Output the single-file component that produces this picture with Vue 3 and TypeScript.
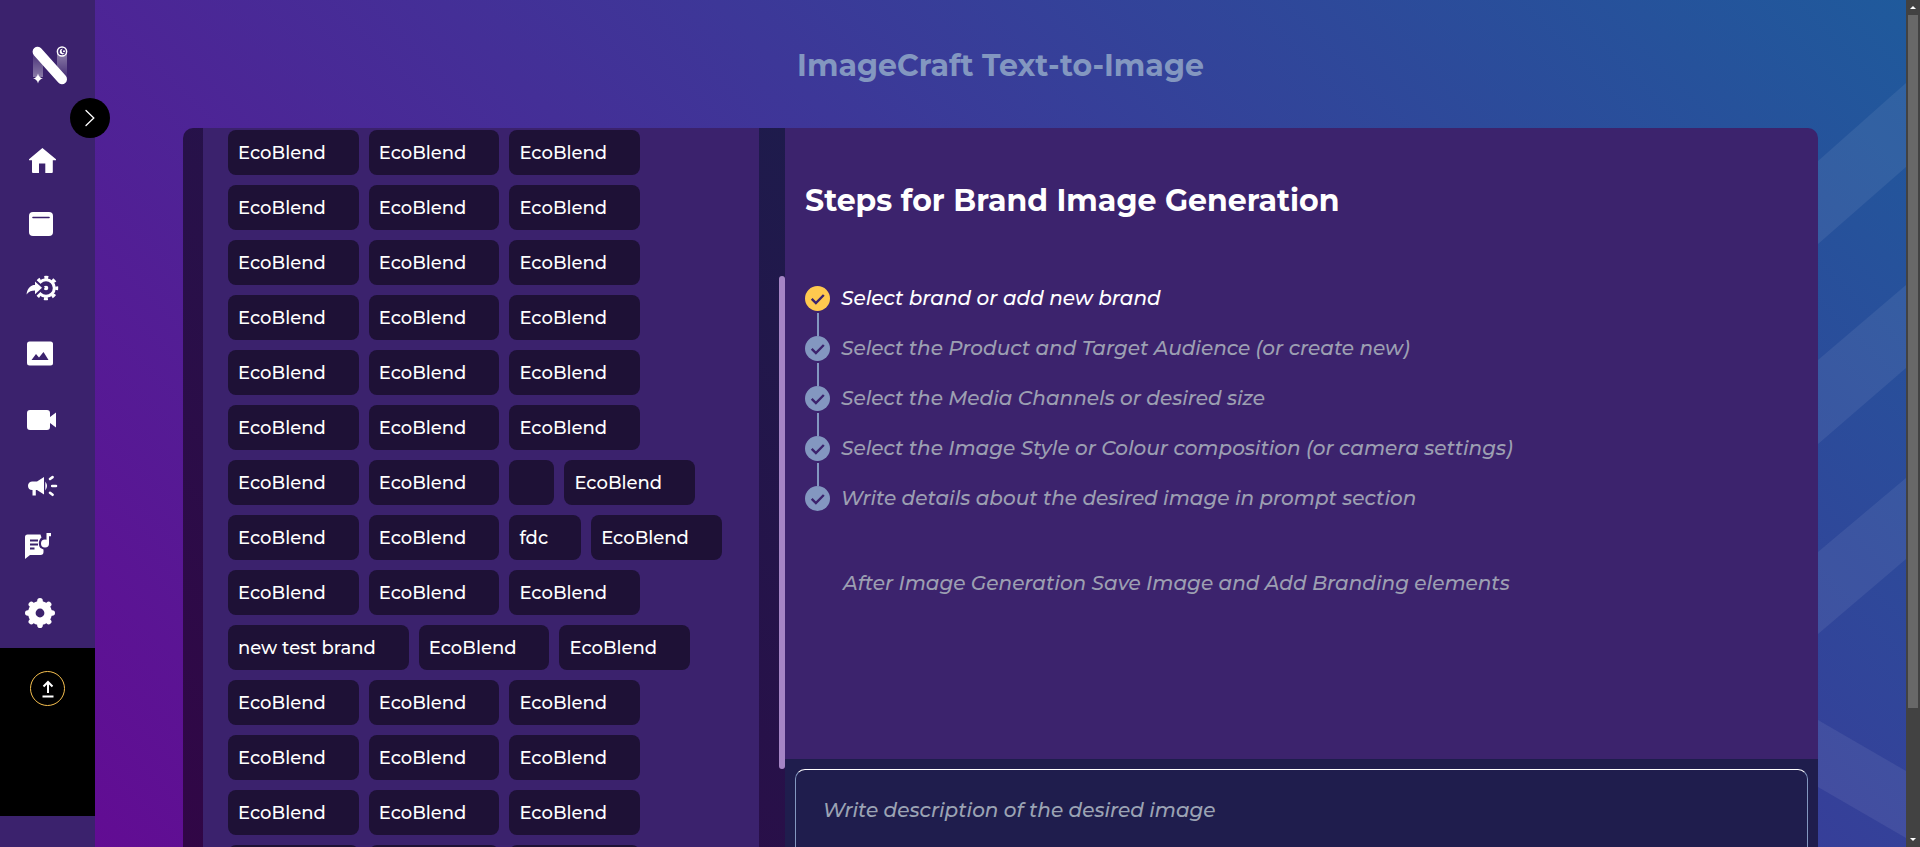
<script setup lang="ts">
import { ref } from 'vue'

interface NavItem {
  id: string
  label: string
}

const navItems: NavItem[] = [
  { id: 'home', label: 'Home' },
  { id: 'board', label: 'Projects' },
  { id: 'process', label: 'Automation' },
  { id: 'image', label: 'Images' },
  { id: 'video', label: 'Video' },
  { id: 'campaign', label: 'Campaigns' },
  { id: 'lyrics', label: 'Audio and text' },
  { id: 'settings', label: 'Settings' },
]

const gearTeeth: number[] = [0, 45, 90, 135, 180, 225, 270, 315]

const eco = (count: number): string[] => Array.from({ length: count }, () => 'EcoBlend')

const brands: string[] = [
  ...eco(20),
  '',
  ...eco(3),
  'fdc',
  ...eco(4),
  'new test brand',
  ...eco(14),
]

const steps: string[] = [
  'Select brand or add new brand',
  'Select the Product and Target Audience (or create new)',
  'Select the Media Channels or desired size',
  'Select the Image Style or Colour composition (or camera settings)',
  'Write details about the desired image in prompt section',
]

const currentStep = ref(0)
const prompt = ref('')
</script>

<template>
  <div class="shell">
    <aside class="sidebar">
      <a class="logo" href="#" aria-label="Home page">
        <svg width="40" height="42" viewBox="0 0 40 42" aria-hidden="true">
          <defs>
            <linearGradient id="fadeUp" x1="0" y1="0" x2="0" y2="1">
              <stop offset="0" stop-color="#fff" stop-opacity="0.05" />
              <stop offset="1" stop-color="#fff" stop-opacity="0.4" />
            </linearGradient>
            <linearGradient id="fadeDown" x1="0" y1="0" x2="0" y2="1">
              <stop offset="0" stop-color="#fff" stop-opacity="0.4" />
              <stop offset="1" stop-color="#fff" stop-opacity="0.05" />
            </linearGradient>
          </defs>
          <rect x="2" y="7" width="10" height="25" fill="url(#fadeUp)" />
          <rect x="26" y="9" width="10" height="24" fill="url(#fadeDown)" />
          <path d="M6.600 6.800 31 34.200" stroke="#fff" stroke-width="10" stroke-linecap="round" />
          <path d="M7 28.500q.8 4.200 5 5-4.200.8-5 5-.8-4.200-5-5 4.200-.8 5-5z" fill="#fff" />
          <circle cx="31" cy="6.500" r="4.600" fill="#3b226d" stroke="#fff" stroke-width="1.500" />
          <path d="M32 3.800a2.800 2.800 0 1 0 1.800 4.300 2.200 2.200 0 0 1-1.800-4.300z" fill="#fff" />
          <circle cx="33" cy="6.300" r="1" fill="#fff" />
        </svg>
      </a>
      <button class="expand" type="button" aria-label="Expand menu">
        <svg width="20" height="20" viewBox="0 0 20 20" aria-hidden="true">
          <path d="M6 2.500 13.800 10 6 17.500" fill="none" stroke="#fff" stroke-width="1.300" stroke-linecap="round" />
        </svg>
      </button>

      <nav class="nav" aria-label="Main">
        <a v-for="item in navItems" :key="item.id" class="nav-link" href="#" :aria-label="item.label">
          <svg width="48" height="48" viewBox="0 0 48 48" fill="#fff" aria-hidden="true">
            <path
              v-if="item.id === 'home'"
              d="M26.400 12 13 23.200v1h3V36a1 1 0 0 0 1 1h6v-9.500h6.300V37h6.500a1 1 0 0 0 1-1V24.200H40v-1z"
            />
            <g v-else-if="item.id === 'board'">
              <rect x="13" y="11" width="24" height="24" rx="4" />
              <path d="M17 16.500h16" stroke="#3b226d" stroke-width="1.600" stroke-linecap="round" />
            </g>
            <g v-else-if="item.id === 'process'">
              <circle cx="30" cy="22" r="8.300" fill="none" stroke="#fff" stroke-width="3" />
              <circle
                cx="30" cy="22" r="10.700" fill="none" stroke="#fff" stroke-width="3"
                stroke-dasharray="4 4.403" stroke-dashoffset="2"
              />
              <circle cx="30" cy="22" r="2.300" />
              <path
                d="M10.500 28.500C11.500 21.500 15 19 19 19v-3.500l7 6.300-7 6.500v-3.700c-3.500 0-6 1-8.500 3.900z"
                stroke="#3b226d" stroke-width="4" paint-order="stroke"
              />
            </g>
            <g v-else-if="item.id === 'image'">
              <rect x="11" y="10.500" width="26" height="24" rx="2.500" />
              <path d="M15.500 29 20 23l3 3.500 4.500-5.500 5 8z" fill="#3b226d" />
            </g>
            <path
              v-else-if="item.id === 'video'"
              d="M14 14h17a3 3 0 0 1 3 3v4l6-4.500v15L34 27v4a3 3 0 0 1-3 3H14a3 3 0 0 1-3-3V17a3 3 0 0 1 3-3z"
            />
            <g v-else-if="item.id === 'campaign'">
              <path d="M17 20.500h4l7-4.500v17.500l-7-4.500h-1.200v5.500h-3.300V29a4.300 4.300 0 0 1-4.500-4 4.300 4.300 0 0 1 5-4.500z" />
              <path d="M29.300 20.500q3.400 4.500 0 9z" />
              <path d="m34 18 2.600-1.900M36.200 25h3.800M34 31.800l2.600 2" fill="none" stroke="#fff" stroke-width="2.600" stroke-linecap="round" />
            </g>
            <g v-else-if="item.id === 'lyrics'">
              <path d="M11.500 8.500h13l1 3c-3 2-3.500 8-1 10.500l3 1.500v2.500a3 3 0 0 1-3 3H14L9 33V11a2.500 2.500 0 0 1 2.500-2.500z" />
              <path d="M14 14.500h8M14 18.500h8M14 22.500h4.500" fill="none" stroke="#3b226d" stroke-width="2" />
              <circle cx="29" cy="17.500" r="4" />
              <path d="M30.500 17V7H35v3.300h-2V17z" />
            </g>
            <g v-else fill="none" stroke="#fff">
              <path
                v-for="angle in gearTeeth"
                :key="angle"
                d="M24 12.500v-2.700"
                :transform="`rotate(${angle} 24 22)`"
                stroke-width="5.600"
                stroke-linecap="round"
              />
              <circle cx="24" cy="22" r="8.200" stroke-width="7.600" />
            </g>
          </svg>
        </a>
      </nav>

      <div class="upgrade">
        <button class="upload" type="button" aria-label="Upload">
          <svg width="18" height="20" viewBox="0 0 18 20" fill="none" stroke="#fff" stroke-width="2" aria-hidden="true">
            <path d="M9 14V3M4.500 7.500 9 3l4.500 4.500M3.500 17.500h11" />
          </svg>
        </button>
      </div>
    </aside>

    <main class="main">
      <svg class="rays" width="88" height="847" viewBox="0 0 88 847" fill="#fff" fill-opacity="0.07" aria-hidden="true">
        <path d="M0 161 88 83v84L0 244z" />
        <path d="M0 360 88 285v83L0 444z" />
        <path d="M0 552 88 478v81L0 634z" />
        <path d="M0 720 88 771v67L0 787z" />
      </svg>

      <h1 class="title">ImageCraft Text-to-Image</h1>

      <div class="card">
        <section class="brands" aria-label="Brands">
          <div class="brand-list">
            <button v-for="(brand, i) in brands" :key="i" class="chip" type="button">{{ brand }}</button>
          </div>
          <div class="track" aria-hidden="true"><div class="thumb"></div></div>
        </section>

        <section class="guide">
          <div class="guide-body">
            <h2 class="guide-title">Steps for Brand Image Generation</h2>
            <ol class="steps">
              <li v-for="(step, i) in steps" :key="step" class="step" :class="{ active: i === currentStep }">
                <span class="marker">
                  <svg width="25" height="25" viewBox="0 0 25 25" aria-hidden="true">
                    <circle cx="12.500" cy="12.500" r="12.500" fill="currentColor" />
                    <path d="m6.700 12.800 4.200 4.200 7.900-8" fill="none" stroke="#3c236d" stroke-width="2.400" />
                  </svg>
                  <span v-if="i < steps.length - 1" class="link"></span>
                </span>
                <span class="step-text">{{ step }}</span>
              </li>
            </ol>
            <p class="note">After Image Generation Save Image and Add Branding elements</p>
          </div>
          <div class="prompt">
            <textarea
              v-model="prompt"
              class="prompt-box"
              aria-label="Image description"
              placeholder="Write description of the desired image"
            ></textarea>
          </div>
        </section>
      </div>
    </main>

    <div class="page-scroll" aria-hidden="true">
      <span class="arrow up"></span>
      <span class="page-thumb"></span>
      <span class="arrow down"></span>
    </div>
  </div>
</template>

<style>
html,
body {
  margin: 0;
  overflow: hidden;
}
</style>

<style scoped>
.shell {
  display: flex;
  height: 100vh;
  overflow: hidden;
  background: #3b226d;
  font-family: Montserrat, Inter, 'Open Sans', sans-serif;
}

.shell *,
.shell *::before,
.shell *::after {
  box-sizing: border-box;
}

/* Sidebar */
.sidebar {
  position: relative;
  z-index: 2;
  flex: none;
  width: 95px;
  background: #3b226d;
}

.logo {
  display: block;
  height: 127px;
  padding: 45px 0 0 31px;
}

.expand {
  position: absolute;
  top: 98px;
  right: -15px;
  display: grid;
  place-items: center;
  width: 40px;
  height: 40px;
  padding: 0;
  border: 0;
  border-radius: 50%;
  background: #000;
}

.nav {
  display: flex;
  flex-direction: column;
  height: 521px;
}

.nav-link {
  display: flex;
  align-items: center;
  height: 65px;
  padding-left: 16px;
}

.upgrade {
  display: flex;
  justify-content: center;
  align-items: flex-start;
  height: 168px;
  padding-top: 23px;
  background: #000;
}

.upload {
  display: grid;
  place-items: center;
  width: 35px;
  height: 35px;
  padding: 0;
  border: 1px solid #f5bf4f;
  border-radius: 50%;
  background: transparent;
}

/* Main area */
.main {
  position: relative;
  display: flex;
  flex: 1;
  flex-direction: column;
  min-width: 0;
  background: linear-gradient(45deg, #620c93, #1f5a9c);
}

.rays {
  position: absolute;
  top: 0;
  right: 0;
}

.title {
  flex: none;
  height: 128px;
  margin: 0;
  color: #8397c0;
  font-size: 30px;
  font-weight: 700;
  line-height: 132px;
  text-align: center;
}

.card {
  display: flex;
  flex: 1;
  min-height: 0;
  margin: 0 88px;
  overflow: hidden;
  border-radius: 10px 10px 0 0;
}

.brands {
  display: flex;
  flex: 0 0 602px;
  padding-left: 20px;
  background: linear-gradient(45deg, #310646, #1e1b4c);
}

.brand-list {
  display: flex;
  flex: 1;
  flex-wrap: wrap;
  align-content: flex-start;
  gap: 10px;
  padding: 2px 25px 0;
  background: #3b226d;
}

.chip {
  flex: none;
  min-width: 45px;
  height: 45px;
  padding: 0 33px 0 10px;
  border: 0;
  border-radius: 8px;
  background: #1e1136;
  color: #fff;
  font-family: inherit;
  font-size: 18px;
  font-weight: 500;
  text-align: left;
}

.track {
  display: flex;
  flex: none;
  justify-content: flex-end;
  width: 26px;
  padding-top: 148px;
}

.thumb {
  width: 6px;
  height: 493px;
  border-radius: 3px;
  background: #a585c5;
}

.guide {
  display: flex;
  flex: 1;
  flex-direction: column;
  min-width: 0;
}

.guide-body {
  flex: none;
  height: 631px;
  padding: 50px 20px 0;
  background: #3c236d;
}

.guide-title {
  margin: 0;
  color: #fff;
  font-size: 30px;
  font-weight: 700;
  line-height: 46px;
}

.steps {
  margin: 62px 0 0;
  padding: 0;
  list-style: none;
}

.step {
  display: flex;
  gap: 11px;
  height: 50px;
  color: #8397c0;
}

.step.active {
  color: #ffc94f;
}

.marker {
  display: flex;
  flex: none;
  flex-direction: column;
  align-items: center;
  gap: 2px;
}

.link {
  width: 2px;
  height: 23px;
  background: #8397c0;
}

.step-text,
.note {
  color: #9c9fb2;
  font-size: 20px;
  font-style: italic;
  font-weight: 500;
  line-height: 24px;
}

.step.active .step-text {
  color: #fff;
}

.note {
  margin: 35px 0 0 38px;
}

.prompt {
  flex: 1;
  padding: 10px 10px 0;
  background: #1f1d4d;
}

.prompt-box {
  display: block;
  width: 100%;
  height: 160px;
  padding: 28px 27px;
  border: 1px solid #8397c0;
  border-top-color: #fff;
  border-radius: 10px;
  outline: 0;
  background: transparent;
  color: #fff;
  font-family: inherit;
  font-size: 20px;
  font-style: italic;
  font-weight: 500;
  line-height: 24px;
  resize: none;
}

.prompt-box::placeholder {
  color: #9ba3b4;
  opacity: 1;
}

/* Page scroll bar */
.page-scroll {
  display: flex;
  flex: none;
  flex-direction: column;
  align-items: center;
  width: 14px;
  padding: 6px 0;
  background: #424242;
}

.page-thumb {
  width: 10px;
  height: 693px;
  margin: 6px 0 auto;
  background: #686868;
}

.arrow {
  border: 3px solid transparent;
}

.arrow.up {
  border-top: 0;
  border-bottom-color: #fff;
}

.arrow.down {
  border-bottom: 0;
  border-top-color: #fff;
}
</style>
